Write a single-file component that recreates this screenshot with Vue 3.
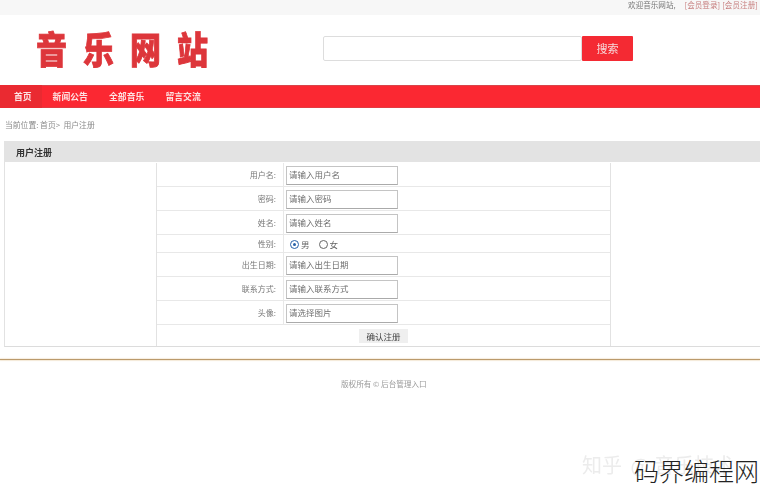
<script setup>
const nav = ['首页', '新闻公告', '全部音乐', '留言交流']
const rowsA = [
  { label: '用户名:', ph: '请输入用户名' },
  { label: '密码:', ph: '请输入密码' },
  { label: '姓名:', ph: '请输入姓名' },
]
const rowsB = [
  { label: '出生日期:', ph: '请输入出生日期' },
  { label: '联系方式:', ph: '请输入联系方式' },
  { label: '头像:', ph: '请选择图片' },
]
</script>

<template>
  <div class="page">
    <div class="shot">
      <div class="topbar">
        <span class="welcome">欢迎音乐网站,</span>
        <a class="link">[会员登录]</a>
        <a class="link">[会员注册]</a>
      </div>
      <header class="header">
        <div class="logo"><span>音</span><span>乐</span><span>网</span><span>站</span></div>
        <div class="search">
          <div class="search-input"></div>
          <div class="search-btn">搜索</div>
        </div>
      </header>
      <nav class="nav">
        <a v-for="(n, i) in nav" :key="n" class="nav-item" :class="{ active: i === 0 }">{{ n }}</a>
      </nav>
      <div class="crumb">当前位置: 首页&gt; &nbsp;用户注册</div>
      <section class="panel">
        <div class="panel-title">用户注册</div>
        <div class="panel-body">
          <div class="form">
            <div v-for="r in rowsA" :key="r.label" class="row">
              <div class="label">{{ r.label }}</div>
              <div class="field"><div class="input">{{ r.ph }}</div></div>
            </div>
            <div class="row row-short">
              <div class="label">性别:</div>
              <div class="field radios">
                <span class="radio checked"></span><span class="radio-text">男</span>
                <span class="radio second"></span><span class="radio-text">女</span>
              </div>
            </div>
            <div v-for="r in rowsB" :key="r.label" class="row">
              <div class="label">{{ r.label }}</div>
              <div class="field"><div class="input">{{ r.ph }}</div></div>
            </div>
            <div class="submit-row"><div class="submit">确认注册</div></div>
          </div>
        </div>
      </section>
      <div class="rule"></div>
      <footer class="footer">版权所有 © 后台管理入口</footer>
      <div class="mark-grey">知乎 <span class="at">@</span> 音乐技术</div>
    </div>
    <div class="mark-black">码界编程网</div>
  </div>
</template>

<style>
html, body { margin: 0; background: #fff; }
</style>

<style scoped>
.page {
  position: relative;
  width: 760px;
  height: 490px;
  overflow: hidden;
  background: #fff;
  font-family: "Noto Sans CJK SC", "Liberation Sans", sans-serif;
  font-size: 8.5px;
  color: #666;
}
.shot {
  height: 490px;
  filter: blur(0.35px);
}
.topbar {
  box-sizing: border-box;
  height: 15px;
  padding: 0 0 6px 628px;
  background: #f7f7f7;
  display: flex;
  align-items: center;
  line-height: 9px;
  font-size: 7.6px;
  white-space: nowrap;
  color: #777;
}
.welcome { width: 60px; }
.link { color: #c77f7f; width: 40px; }
.link + .link { margin-left: 0; }
.header {
  height: 70px;
  display: flex;
  align-items: flex-start;
}
.logo {
  display: flex;
  gap: 16px;
  margin: 13px 0 0 36px;
  width: 287px;
  color: #dd363b;
  font-weight: 900;
  font-size: 31px;
  line-height: 40px;
  -webkit-text-stroke: 0.7px #dd363b;
}
.logo span {
  display: block;
  transform: scaleY(1.2);
}
.search {
  display: flex;
  margin-top: 21px;
}
.search-input {
  width: 257px;
  height: 23px;
  border: 1px solid #ddd;
  border-radius: 2px;
  background: #fff;
}
.search-btn {
  width: 51px;
  height: 25px;
  background: #f42a33;
  color: #f6d9da;
  font-size: 11px;
  line-height: 25px;
  text-align: center;
  border-radius: 1px;
}
.nav {
  height: 23px;
  background: #fb2832;
  display: flex;
  box-shadow: inset 0 1px 0 #d8444a, inset 0 -1px 0 #e23b42;
}
.nav-item {
  padding: 0 10.25px 0 11px;
  color: #fde3e3;
  font-weight: 700;
  font-size: 8.8px;
  line-height: 23px;
}
.nav-item.active {
  padding: 0 10px 0 14px;
  background: #ea2a31;
}
.crumb {
  height: 33px;
  line-height: 33px;
  padding-left: 5px;
  color: #8a8a8a;
  font-size: 7.8px;
}
.panel { margin-left: 4px; }
.panel-title {
  height: 21px;
  line-height: 24px;
  background: #e3e3e3;
  padding-left: 12px;
  color: #333;
  font-weight: 700;
  font-size: 9px;
}
.panel-body {
  border-left: 1px solid #e2e2e2;
  border-bottom: 1px solid #dcdcdc;
  padding: 1px 149px 0 151px;
  height: 185px;
  box-sizing: border-box;
}
.form {
  border-left: 1px solid #e2e2e2;
  border-right: 1px solid #e2e2e2;
  height: 100%;
  box-sizing: border-box;
}
.row {
  display: flex;
  height: 24px;
  box-sizing: border-box;
  border-bottom: 1px solid #e8e8e8;
}
.row-short { height: 18px; }
.label {
  width: 119px;
  padding-right: 7px;
  text-align: right;
  line-height: 23px;
  color: #777;
  font-size: 8px;
}
.row-short .label { line-height: 18px; }
.field {
  flex: 1;
  display: flex;
  align-items: center;
  border-left: 1px solid #e8e8e8;
  padding: 1px 0 0 2px;
}
.input {
  width: 108px;
  height: 17px;
  line-height: 15px;
  padding-left: 2px;
  border: 1px solid #c4c4c4;
  border-bottom-color: #aaa;
  color: #6f6f6f;
  font-size: 8.5px;
  background: #fff;
}
.radios { font-size: 8.5px; }
.radio {
  width: 7px;
  height: 7px;
  margin-left: 4px;
  border: 1px solid #666;
  border-radius: 50%;
  position: relative;
}
.radio.checked { border-color: #2a62a8; }
.radio.checked::after {
  content: "";
  position: absolute;
  left: 2px;
  top: 2px;
  width: 3px;
  height: 3px;
  border-radius: 50%;
  background: #2a62a8;
}
.radio.second { margin-left: 9px; }
.radio-text { margin-left: 2px; }
.submit-row {
  height: 21px;
  display: flex;
  justify-content: center;
  align-items: center;
}
.submit {
  width: 49px;
  height: 14px;
  margin-top: 1px;
  line-height: 14px;
  text-align: center;
  background: #efefef;
  color: #444;
  font-size: 8.5px;
}
.rule {
  height: 1px;
  margin-top: 12px;
  background: #bb9a6c;
  box-shadow: 0 1px 1px #f3e6d2, 0 -1px 1px #f6ecdc;
}
.footer {
  margin-top: 19px;
  padding-left: 341px;
  line-height: 10px;
  color: #9a9a9a;
  font-size: 7.6px;
}
.mark-grey {
  position: absolute;
  left: 582px;
  top: 452px;
  color: #ececec;
  font-size: 20px;
  line-height: 26px;
  white-space: nowrap;
}
.at { margin-left: 4px; }
.mark-black {
  position: absolute;
  left: 634px;
  top: 454px;
  color: #222;
  font-size: 25px;
  line-height: 32px;
  font-weight: 200;
  white-space: nowrap;
}
</style>
